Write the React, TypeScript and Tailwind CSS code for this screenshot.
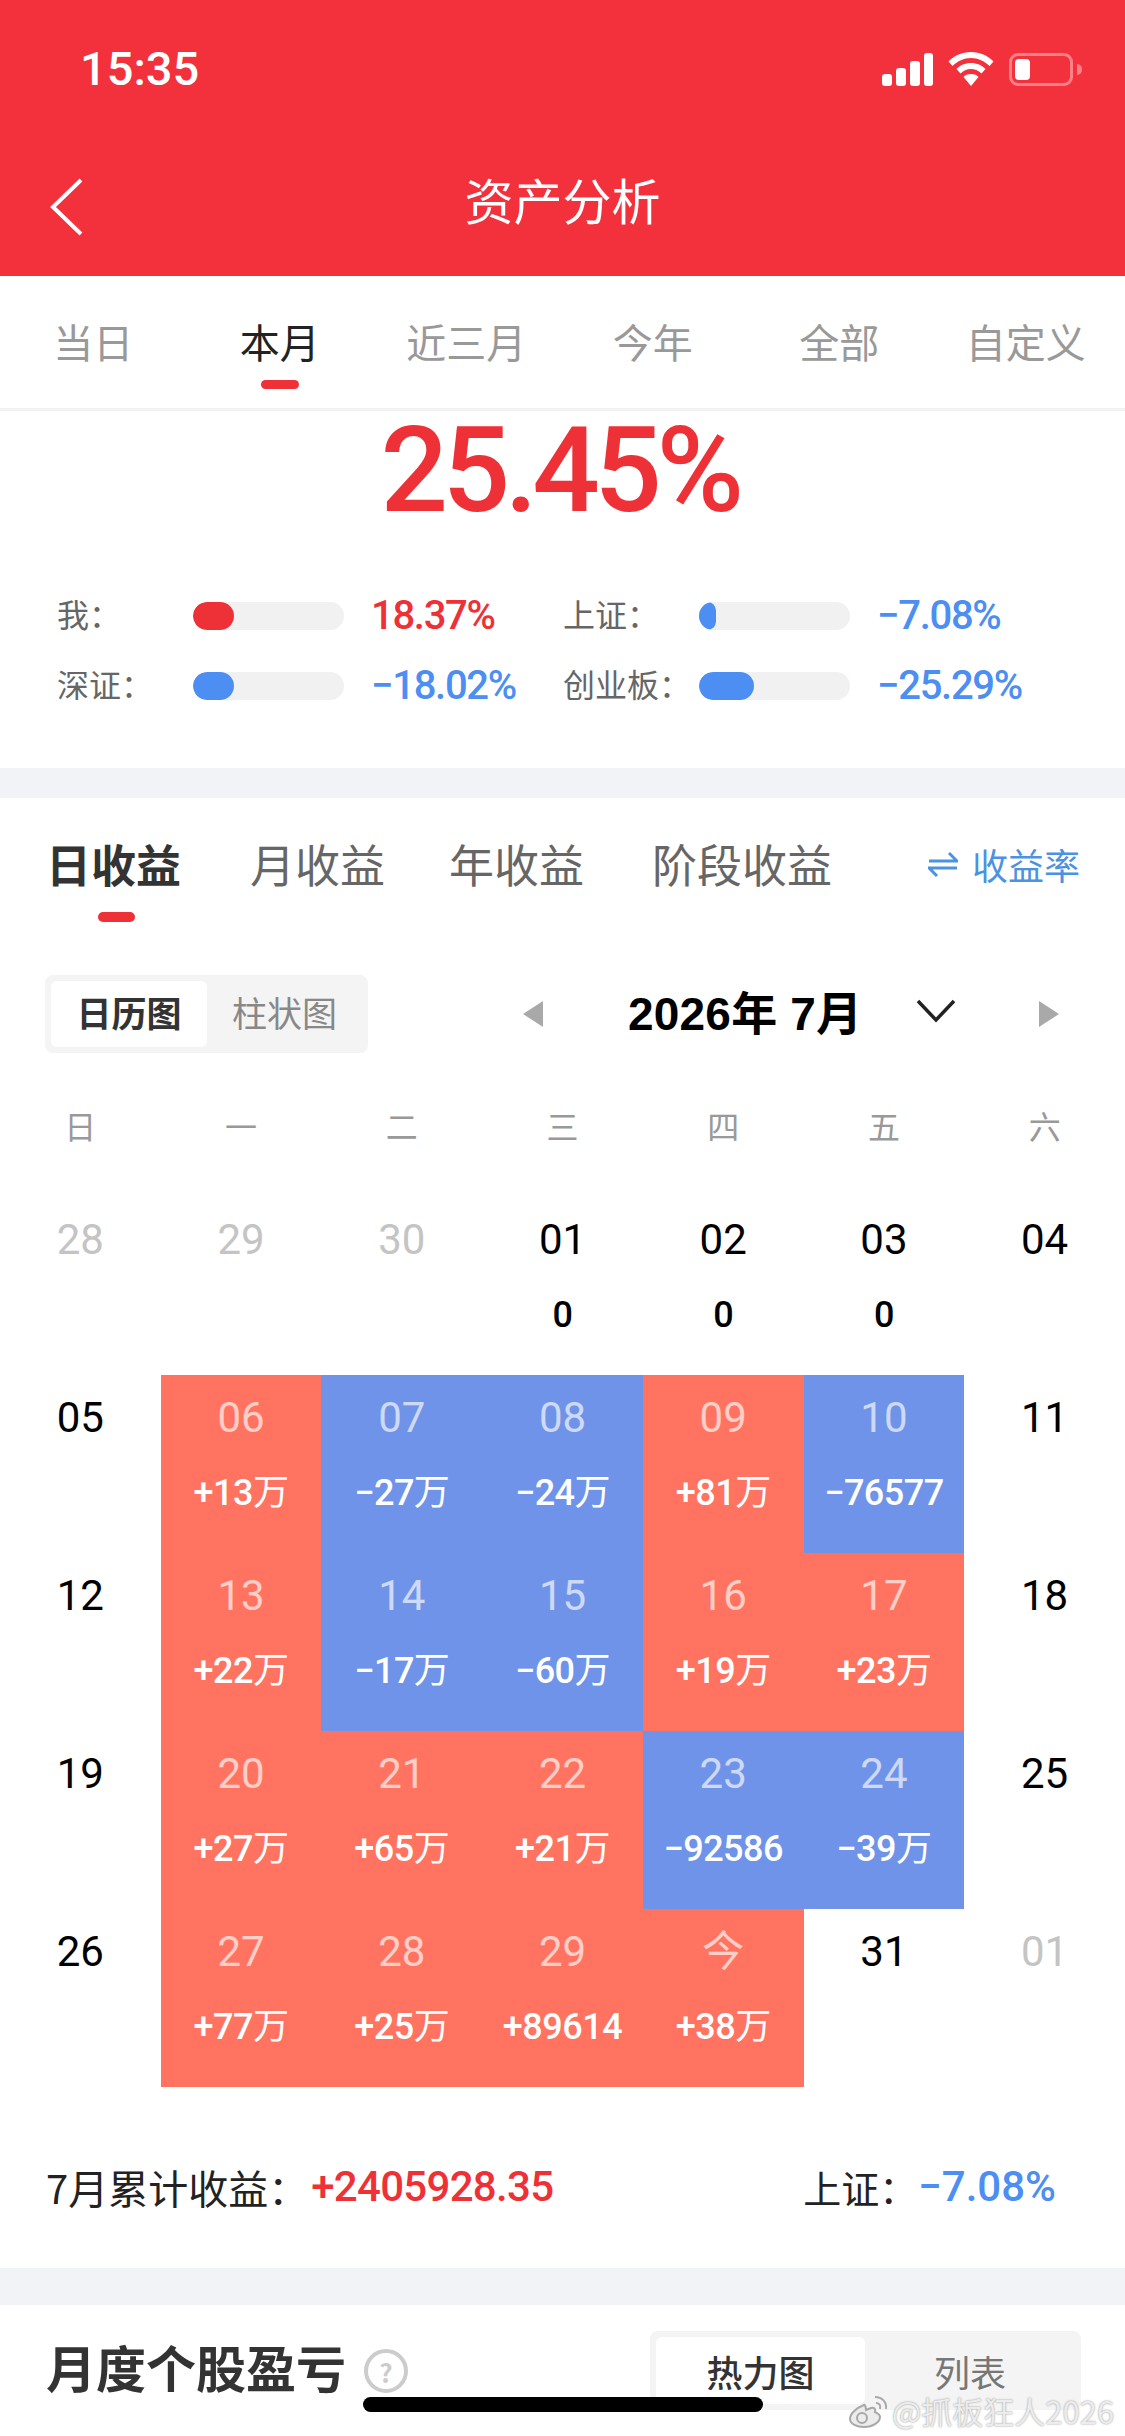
const cjk = "font-['Noto_Sans_CJK_SC',sans-serif]";
const num = "font-['Roboto','Noto_Sans_CJK_SC',sans-serif]";

const periods = ['当日', '本月', '近三月', '今年', '全部', '自定义'];
const weekdays = ['日', '一', '二', '三', '四', '五', '六'];

type Cell = { d: string; v?: string; tone?: 'up' | 'down' | 'off' };

const cells: Cell[] = [
  { d: '28', tone: 'off' }, { d: '29', tone: 'off' }, { d: '30', tone: 'off' },
  { d: '01', v: '0' }, { d: '02', v: '0' }, { d: '03', v: '0' }, { d: '04' },
  { d: '05' },
  { d: '06', v: '+13万', tone: 'up' }, { d: '07', v: '−27万', tone: 'down' }, { d: '08', v: '−24万', tone: 'down' },
  { d: '09', v: '+81万', tone: 'up' }, { d: '10', v: '−76577', tone: 'down' }, { d: '11' },
  { d: '12' },
  { d: '13', v: '+22万', tone: 'up' }, { d: '14', v: '−17万', tone: 'down' }, { d: '15', v: '−60万', tone: 'down' },
  { d: '16', v: '+19万', tone: 'up' }, { d: '17', v: '+23万', tone: 'up' }, { d: '18' },
  { d: '19' },
  { d: '20', v: '+27万', tone: 'up' }, { d: '21', v: '+65万', tone: 'up' }, { d: '22', v: '+21万', tone: 'up' },
  { d: '23', v: '−92586', tone: 'down' }, { d: '24', v: '−39万', tone: 'down' }, { d: '25' },
  { d: '26' },
  { d: '27', v: '+77万', tone: 'up' }, { d: '28', v: '+25万', tone: 'up' }, { d: '29', v: '+89614', tone: 'up' },
  { d: '今', v: '+38万', tone: 'up' }, { d: '31' }, { d: '01', tone: 'off' },
];

const StatusIcons = () => (
  <div className="flex items-center gap-[14px]">
    <svg width="52" height="33" viewBox="0 0 52 33" fill="#fff">
      <rect x="0" y="21" width="10" height="12" rx="3" />
      <rect x="14" y="15" width="10" height="18" rx="3" />
      <rect x="28" y="8" width="10" height="25" rx="3" />
      <rect x="42" y="0" width="9" height="33" rx="3" />
    </svg>
    <svg width="46" height="34" viewBox="0 0 46 34" fill="#fff">
      <path d="M23 0C14 0 6.500 3.500 0.500 9.500L4.500 14C9.500 9 16 6 23 6s13.500 3 18.500 8l4-4.500C39.500 3.500 32 0 23 0z" />
      <path d="M23 11c-6 0-11 2.300-14.500 6l4 4.400C15 19 19 17 23 17s8 2 10.500 4.400l4-4.400C34 13.300 29 11 23 11z" />
      <path d="M23 22c-3.500 0-6 1.300-7.500 3L23 34l7.500-9c-1.500-1.700-4-3-7.500-3z" />
    </svg>
    <div className="flex items-center ml-[1px]">
      <div className="w-[64px] h-[33px] rounded-[9px] border-[3px] border-[#ff8087] p-[3px] flex">
        <div className="w-[15px] h-full rounded-[4px] bg-white" />
      </div>
      <div className="w-[5px] h-[11px] rounded-r-full bg-[#ff8087] ml-[4px]" />
    </div>
  </div>
);

const Compare = ({ label, value, width, red }: { label: string; value: string; width: number; red?: boolean }) => (
  <div className="flex items-center h-[44px]">
    <span className={`w-[136px] -mt-[6px] text-[32px] leading-[44px] text-[#666] ${cjk}`}>{label}</span>
    <div className="h-[28px] w-[151px] rounded-full bg-[#f1f1f2] overflow-hidden shrink-0">
      <div className={`h-full rounded-full ${red ? 'bg-[#ee3137]' : 'bg-[#4c8ef1]'}`} style={{ width }} />
    </div>
    <span className={`ml-[27px] text-[40px] leading-[44px] font-medium tracking-[-1.3px] ${num} ${red ? 'text-[#ee3137]' : 'text-[#4c8ef1]'}`}>{value}</span>
  </div>
);

const DayCell = ({ cell }: { cell: Cell }) => {
  const bg = cell.tone === 'up' ? 'bg-[#ff7360]' : cell.tone === 'down' ? 'bg-[#6f93e8]' : '';
  const dateColor = cell.tone === 'off' ? 'text-[#c4c4c4]' : cell.tone ? 'text-white/65' : 'text-black';
  const wan = cell.v?.endsWith('万');
  return (
    <div className={`h-[178px] flex flex-col items-center pt-[21px] ${bg}`}>
      <span className={`text-[42px] leading-[44px] ${num} ${dateColor}`}>{cell.d}</span>
      {cell.v && (
        <span className={`mt-[31px] text-[36px] leading-[44px] font-medium tracking-[-0.5px] ${num} ${cell.tone ? 'text-white' : 'text-black'}`}>
          {wan ? cell.v.slice(0, -1) : cell.v}
          {wan && <span className="font-normal">万</span>}
        </span>
      )}
    </div>
  );
};

export default function App() {
  return (
    <div className={`relative w-[1125px] h-[2436px] overflow-hidden bg-white ${cjk}`}>
      <header className="h-[276px] bg-[#f3313c] text-white">
        <div className="h-[138px] pl-[80px] pr-[43px] pt-[44px] flex items-start justify-between">
          <span className={`text-[47px] leading-[50px] font-medium ${num}`}>15:35</span>
          <div className="pt-[8px]"><StatusIcons /></div>
        </div>
        <div className="relative flex justify-center">
          <svg className="absolute left-[50px] top-[40px]" width="34" height="58" viewBox="0 0 34 58" fill="none" stroke="#fff" strokeWidth="4">
            <path d="M31 2 L3 29 L31 56" />
          </svg>
          <span className="text-[49px] leading-[64px] mt-[29px]">资产分析</span>
        </div>
      </header>

      <nav className="grid grid-cols-6 h-[135px] pr-[6px] border-b-[3px] border-[#f2f2f3]">
        {periods.map((p, i) => (
          <div key={p} className="flex flex-col items-center pt-[39px]">
            <span className={`text-[40px] leading-[52px] ${i === 1 ? 'text-[#222]' : 'text-[#999]'}`}>{p}</span>
            {i === 1 && <div className="mt-[13px] w-[38px] h-[9px] rounded-full bg-[#ee3137]" />}
          </div>
        ))}
      </nav>

      <section className="h-[357px] flex flex-col">
        <div className={`text-center pr-[6px] text-[119px] leading-[130px] -mt-[5px] font-medium tracking-[-5.5px] text-[#ee3137] ${num}`}>25.45%</div>
        <div className="mt-[58px] pl-[57px] grid grid-cols-[506px_1fr] gap-y-[26px]">
          <Compare label="我：" value="18.37%" width={41} red />
          <Compare label="上证：" value="−7.08%" width={17} />
          <Compare label="深证：" value="−18.02%" width={41} />
          <Compare label="创业板：" value="−25.29%" width={55} />
        </div>
      </section>

      <div className="h-[30px] bg-[#f2f3f7]" />

      <section className="h-[1470px]">
        <div className="h-[124px] flex items-start pl-[46px] pr-[45px] pt-[36px]">
          <div className="relative">
            <span className="text-[45px] leading-[60px] font-bold text-[#333]">日收益</span>
            <div className="absolute left-[52px] top-[78px] w-[37px] h-[10px] rounded-full bg-[#ee3137]" />
          </div>
          <span className="ml-[69px] text-[45px] leading-[60px] text-[#666]">月收益</span>
          <span className="ml-[64px] text-[45px] leading-[60px] text-[#666]">年收益</span>
          <span className="ml-[68px] text-[45px] leading-[60px] text-[#666]">阶段收益</span>
          <div className="ml-auto flex items-center h-[60px] text-[#4b92e2]">
            <svg width="30" height="26" viewBox="0 0 30 26" fill="none" stroke="#4b92e2" strokeWidth="3">
              <path d="M1 10 H29 L21 2" />
              <path d="M29 17 H1 L9 25" />
            </svg>
            <span className="ml-[14px] text-[36px]">收益率</span>
          </div>
        </div>

        <div className="mt-[53px] h-[78px] pl-[45px] pr-[66px] flex items-center">
          <div className="w-[323px] h-[78px] rounded-[8px] bg-[#f4f4f5] p-[6px] flex">
            <div className="w-[156px] pb-[3px] rounded-[6px] bg-white flex items-center justify-center text-[35px] font-bold text-[#333]">日历图</div>
            <div className="flex-1 pb-[3px] flex items-center justify-center text-[35px] text-[#888]">柱状图</div>
          </div>
          <svg className="ml-[155px]" width="20" height="26" viewBox="0 0 20 26" fill="#a9a9a9"><path d="M20 0V26L0 13z" /></svg>
          <span className="ml-[85px] text-[46px] leading-[60px] font-bold text-black tracking-[0.2px] font-['Liberation_Sans','Noto_Sans_CJK_SC',sans-serif]">2026年 7月</span>
          <svg className="ml-[54px] -mt-[6px]" width="40" height="24" viewBox="0 0 40 24" fill="none" stroke="#222" strokeWidth="3.500"><path d="M2 2 L20 21 L38 2" /></svg>
          <svg className="ml-auto" width="20" height="26" viewBox="0 0 20 26" fill="#a9a9a9"><path d="M0 0V26L20 13z" /></svg>
        </div>

        <div className="grid grid-cols-7 mt-[44px]">
          {weekdays.map((w) => (
            <div key={w} className="h-[100px] text-center text-[32px] leading-[56px] text-[#999]">{w}</div>
          ))}
          {cells.map((c, i) => <DayCell key={i} cell={c} />)}
        </div>

        <div className="mt-[72px] pl-[46px] pr-[69px] flex items-center justify-between text-[38px] leading-[56px] text-[#222]">
          <div className="flex items-center">
            <span className="text-[40px]">7月累计收益：</span>
            <span className={`ml-[3px] text-[42px] font-medium tracking-[-0.7px] text-[#ee3137] ${num}`}>+2405928.35</span>
          </div>
          <div className="flex items-center">
            <span>上证：</span>
            <span className={`ml-[1px] text-[42px] font-medium text-[#4c8ef1] ${num}`}>−7.08%</span>
          </div>
        </div>
      </section>

      <div className="h-[37px] bg-[#f2f3f7]" />

      <section className="flex items-start pl-[46px] pr-[44px] pt-[26px]">
        <span className="mt-[2px] text-[50px] leading-[66px] font-bold text-[#333]">月度个股盈亏</span>
        <div className="ml-[18px] mt-[18px] w-[44px] h-[44px] rounded-full border-[4px] border-[#ccc] flex items-center justify-center text-[26px] font-bold text-[#ccc]">?</div>
        <div className="ml-auto w-[431px] h-[79px] rounded-[8px] bg-[#f4f4f5] p-[6px] flex">
          <div className="w-[209px] rounded-[6px] bg-white flex items-center justify-center text-[36px] leading-[44px] font-medium text-[#333]">热力图</div>
          <div className="flex-1 flex items-center justify-center text-[36px] leading-[44px] text-[#777]">列表</div>
        </div>
      </section>

      <div className="absolute left-[363px] top-[2397px] w-[400px] h-[15px] rounded-full bg-black" />
      <div className="absolute left-[848px] top-[2393px] flex items-center text-[31px] leading-[36px] text-[#ececec] [text-shadow:0_0_2px_#8c8c8c]">
        <svg width="42" height="34" viewBox="0 0 42 34" fill="#ececec" stroke="#a8a8a8" strokeWidth="2">
          <path d="M16 11C8 14 2 20 2 25c0 5 7 8 14 8 9 0 16-5 16-10 0-3-3-4-5-5 1-3-1-5-4-4l-5 2c0-2-1-6-2-5z" />
          <circle cx="14" cy="24" r="5" fill="none" />
          <path d="M27 3c7 0 12 5 11 12" fill="none" />
          <path d="M28 9c3 0 5 2 4 6" fill="none" />
        </svg>
        <span className="ml-[2px]">@抓板狂人2026</span>
      </div>
    </div>
  );
}
